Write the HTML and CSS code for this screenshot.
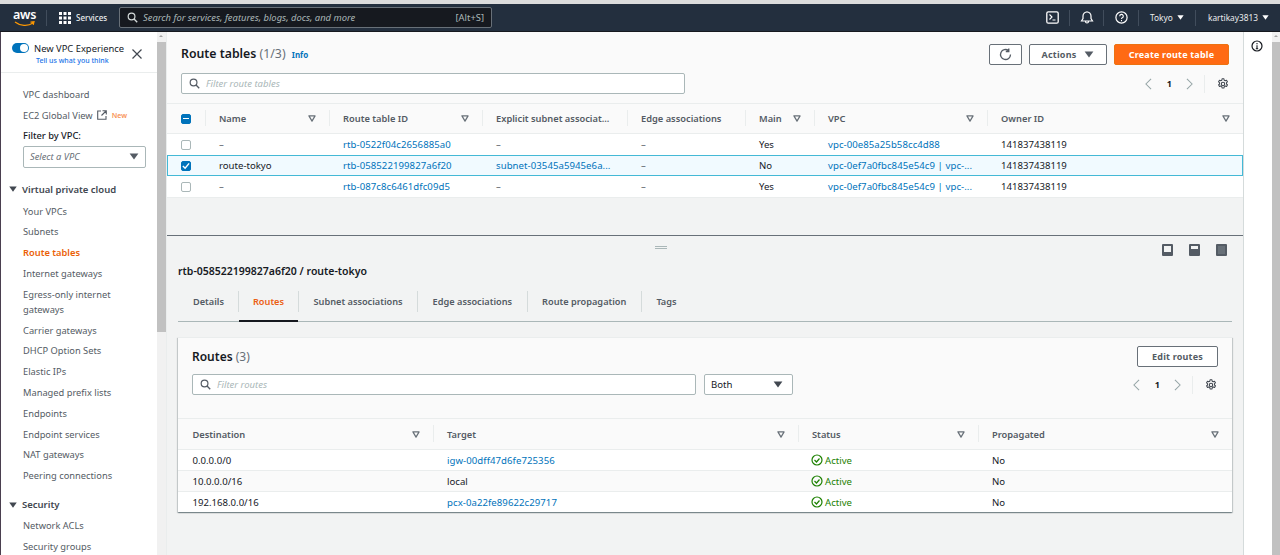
FILE: index.html
```html
<!DOCTYPE html>
<html lang="en">
<head>
<meta charset="utf-8">
<title>Route tables</title>
<link rel="stylesheet" href="styles.css">
</head>
<body>
<svg class="defs" width="0" height="0">
  <symbol id="sort" viewBox="0 0 9 8"><path d="M1 1h7L4.500 7z" fill="none" stroke="#687078" stroke-width="1.400" stroke-linejoin="round"/></symbol>
  <symbol id="tri" viewBox="0 0 10 8"><path d="M0 .5h10L5 7.500z" fill="currentColor"/></symbol>
  <symbol id="search" viewBox="0 0 14 14"><circle cx="5.800" cy="5.800" r="4.300" fill="none" stroke="currentColor" stroke-width="1.500"/><path d="M9 9l4 4" stroke="currentColor" stroke-width="1.700"/></symbol>
  <symbol id="gear" viewBox="0 0 14 14"><circle cx="7" cy="7" r="2" fill="none" stroke="#414750" stroke-width="1.300"/><path d="M5.900 1h2.200l.3 1.600 1.200.6 1.500-.6 1.100 1.900-1.200 1 .1 1.500 1.200 1-1.100 1.900-1.500-.6-1.200.7-.3 1.700H5.900l-.3-1.700-1.200-.7-1.500.6-1.100-1.900 1.200-1V5.500l-1.200-1 1.100-1.900 1.500.6 1.200-.6z" fill="none" stroke="#414750" stroke-width="1.200" stroke-linejoin="round"/></symbol>
  <symbol id="left" viewBox="0 0 8 14"><path d="M7 1L1 7l6 6" fill="none" stroke="#95a5a6" stroke-width="1.200"/></symbol>
  <symbol id="right" viewBox="0 0 8 14"><path d="M1 1l6 6-6 6" fill="none" stroke="#95a5a6" stroke-width="1.200"/></symbol>
  <symbol id="ok" viewBox="0 0 12 12"><circle cx="6" cy="6" r="5" fill="none" stroke="#1d8102" stroke-width="1.200"/><path d="M3.500 6l2 2 3-3.500" fill="none" stroke="#1d8102" stroke-width="1.200"/></symbol>
</svg>

<div class="browser-strip"></div>

<header class="topnav">
  <div class="logo"><span class="logo-text">aws</span><svg class="smile" width="22" height="6" viewBox="0 0 22 6"><path d="M1 1c5 4 13 4.500 18 1M16.500 1.200l3.500-.4-.8 3" fill="none" stroke="#f90" stroke-width="1.200"/></svg></div>
  <span class="nav-sep"></span>
  <svg class="grid-icon" width="12" height="12" viewBox="0 0 12 12"><path d="M0 0h3v3H0zM4.500 0h3v3h-3zM9 0h3v3H9zM0 4.500h3v3H0zM4.500 4.500h3v3h-3zM9 4.500h3v3H9zM0 9h3v3H0zM4.500 9h3v3h-3zM9 9h3v3H9z" fill="#fff"/></svg>
  <span class="services">Services</span>
  <div class="nav-search">
    <svg class="nav-search-icon" width="11" height="11"><use href="#search"/></svg>
    <span class="nav-search-text">Search for services, features, blogs, docs, and more</span>
    <span class="nav-search-key">[Alt+S]</span>
  </div>
  <div class="nav-right">
    <span class="nav-item nav-shell"><svg width="13" height="13" viewBox="0 0 13 13"><rect x=".8" y=".8" width="11.400" height="11.400" rx="1.500" fill="none" stroke="#fff" stroke-width="1.300"/><path d="M3.500 3.500L6 6 3.500 8.500M6.500 9h3" fill="none" stroke="#fff" stroke-width="1.100"/></svg></span>
    <span class="nav-item nav-bell"><svg width="14" height="13" viewBox="0 0 14 13"><path d="M1.500 10h11L11 7.500V5A4 4 0 0 0 3 5v2.500zM5.500 10.500a1.500 1.500 0 0 0 3 0M7 1V.2" fill="none" stroke="#fff" stroke-width="1.200"/></svg></span>
    <span class="nav-item nav-help"><svg width="13" height="13" viewBox="0 0 13 13"><circle cx="6.500" cy="6.500" r="5.600" fill="none" stroke="#fff" stroke-width="1.200"/><path d="M4.700 5.200a1.800 1.800 0 1 1 2.600 1.600c-.6.300-.8.700-.8 1.300M6.500 9.100v1.100" fill="none" stroke="#fff" stroke-width="1.100"/></svg></span>
    <span class="nav-item nav-region">Tokyo <svg class="nav-tri" width="7" height="5"><use href="#tri"/></svg></span>
    <span class="nav-item nav-user">kartikay3813 <svg class="nav-tri" width="7" height="5"><use href="#tri"/></svg></span>
  </div>
</header>

<div class="app">
  <aside class="sidebar">
    <div class="side-scroll">
      <div class="side-head">
        <div class="toggle-row">
          <span class="toggle"></span>
          <div class="toggle-copy">
            <div class="toggle-label">New VPC Experience</div>
            <div class="toggle-link">Tell us what you think</div>
          </div>
          <svg class="close" width="10" height="10" viewBox="0 0 10 10"><path d="M.5.500l9 9M9.500.500l-9 9" stroke="#414750" stroke-width="1.200"/></svg>
        </div>
      </div>
      <nav class="side-nav">
        <a class="side-link top-link">VPC dashboard</a>
        <a class="side-link ec2-link">EC2 Global View <svg width="10" height="10" viewBox="0 0 10 10"><path d="M4 1H.7v8.300H9V6M5.500.700h3.800v3.800M9 1L4.500 5.500" fill="none" stroke="#545b64" stroke-width="1.100"/></svg><span class="new-tag">New</span></a>
        <div class="filter-label">Filter by VPC:</div>
        <div class="filter-select"><span>Select a VPC</span><svg width="10" height="7" class="select-tri"><use href="#tri"/></svg></div>
        <div class="side-group"><svg width="8" height="6" class="group-tri"><use href="#tri"/></svg>Virtual private cloud</div>
        <a class="side-link">Your VPCs</a>
        <a class="side-link">Subnets</a>
        <a class="side-link active">Route tables</a>
        <a class="side-link">Internet gateways</a>
        <a class="side-link">Egress-only internet gateways</a>
        <a class="side-link">Carrier gateways</a>
        <a class="side-link">DHCP Option Sets</a>
        <a class="side-link">Elastic IPs</a>
        <a class="side-link">Managed prefix lists</a>
        <a class="side-link">Endpoints</a>
        <a class="side-link">Endpoint services</a>
        <a class="side-link">NAT gateways</a>
        <a class="side-link">Peering connections</a>
        <div class="side-group group-sec"><svg width="8" height="6" class="group-tri"><use href="#tri"/></svg>Security</div>
        <a class="side-link">Network ACLs</a>
        <a class="side-link">Security groups</a>
      </nav>
    </div>
    <div class="scrollbar side-bar"><span class="sb-arrow"></span><span class="sb-thumb side-thumb"></span></div>
  </aside>

  <main class="content">
    <section class="upper">
      <div class="upper-head">
        <div class="title-row">
          <h1 class="page-title">Route tables <span class="count">(1/3)</span> <a class="info">Info</a></h1>
          <div class="actions">
            <button class="btn btn-icon"><svg width="13" height="13" viewBox="0 0 13 13"><path d="M11.500 6.500A5 5 0 1 1 9.500 2.500M9.800.5v3h-3" fill="none" stroke="#545b64" stroke-width="1.300"/></svg></button>
            <button class="btn btn-actions">Actions <svg width="10" height="7"><use href="#tri"/></svg></button>
            <button class="btn btn-primary">Create route table</button>
          </div>
        </div>
        <div class="filter-row">
          <div class="search-box search-top"><svg width="11" height="11"><use href="#search"/></svg><span>Filter route tables</span></div>
          <div class="pager pager-top"><svg width="7" height="12"><use href="#left"/></svg><b>1</b><svg width="7" height="12"><use href="#right"/></svg><span class="pager-sep"></span><svg width="12" height="12"><use href="#gear"/></svg></div>
        </div>
      </div>
      <div class="rt-table">
        <div class="rt-row rt-header">
          <div class="cell cell-check"><span class="check check-mixed"></span></div>
          <div class="cell th">Name<svg width="8" height="7"><use href="#sort"/></svg></div>
          <div class="cell th">Route table ID<svg width="8" height="7"><use href="#sort"/></svg></div>
          <div class="cell th">Explicit subnet associat...</div>
          <div class="cell th">Edge associations</div>
          <div class="cell th">Main<svg width="8" height="7"><use href="#sort"/></svg></div>
          <div class="cell th">VPC<svg width="8" height="7"><use href="#sort"/></svg></div>
          <div class="cell th">Owner ID<svg width="8" height="7"><use href="#sort"/></svg></div>
        </div>
        <div class="rt-row">
          <div class="cell cell-check"><span class="check"></span></div>
          <div class="cell dash">–</div><div class="cell"><a class="link">rtb-0522f04c2656885a0</a></div><div class="cell dash">–</div><div class="cell dash">–</div><div class="cell">Yes</div><div class="cell"><a class="link">vpc-00e85a25b58cc4d88</a></div><div class="cell">141837438119</div>
        </div>
        <div class="rt-row rt-selected">
          <div class="cell cell-check"><span class="check check-on"><svg width="9" height="8" viewBox="0 0 9 8"><path d="M1 4l2.500 2.500L8 1" fill="none" stroke="#fff" stroke-width="1.600"/></svg></span></div>
          <div class="cell">route-tokyo</div><div class="cell"><a class="link">rtb-058522199827a6f20</a></div><div class="cell"><a class="link">subnet-03545a5945e6a...</a></div><div class="cell dash">–</div><div class="cell">No</div><div class="cell"><a class="link">vpc-0ef7a0fbc845e54c9 | vpc-...</a></div><div class="cell">141837438119</div>
        </div>
        <div class="rt-row">
          <div class="cell cell-check"><span class="check"></span></div>
          <div class="cell dash">–</div><div class="cell"><a class="link">rtb-087c8c6461dfc09d5</a></div><div class="cell dash">–</div><div class="cell dash">–</div><div class="cell">Yes</div><div class="cell"><a class="link">vpc-0ef7a0fbc845e54c9 | vpc-...</a></div><div class="cell">141837438119</div>
        </div>
      </div>
    </section>

    <section class="lower">
      <div class="split-bar">
        <span class="handle"></span>
        <div class="split-icons">
          <span class="split-icon split-a"></span><span class="split-icon split-b"></span><span class="split-icon split-c"></span>
        </div>
      </div>
      <h2 class="detail-title">rtb-058522199827a6f20 / route-tokyo</h2>
      <div class="tabs">
        <span class="tab">Details</span>
        <span class="tab tab-active">Routes</span>
        <span class="tab">Subnet associations</span>
        <span class="tab">Edge associations</span>
        <span class="tab">Route propagation</span>
        <span class="tab tab-last">Tags</span>
      </div>
      <div class="card">
        <div class="card-head">
          <div class="card-title-row">
            <h2 class="card-title">Routes <span class="count">(3)</span></h2>
            <button class="btn btn-edit">Edit routes</button>
          </div>
          <div class="card-filter">
            <div class="search-box search-routes"><svg width="11" height="11"><use href="#search"/></svg><span>Filter routes</span></div>
            <div class="both-select"><span>Both</span><svg width="10" height="7"><use href="#tri"/></svg></div>
            <div class="pager pager-routes"><svg width="7" height="12"><use href="#left"/></svg><b>1</b><svg width="7" height="12"><use href="#right"/></svg><span class="pager-sep"></span><svg width="12" height="12"><use href="#gear"/></svg></div>
          </div>
        </div>
        <div class="routes-table">
          <div class="r-row r-header">
            <div class="cell th">Destination<svg width="8" height="7"><use href="#sort"/></svg></div>
            <div class="cell th">Target<svg width="8" height="7"><use href="#sort"/></svg></div>
            <div class="cell th">Status<svg width="8" height="7"><use href="#sort"/></svg></div>
            <div class="cell th">Propagated<svg width="8" height="7"><use href="#sort"/></svg></div>
          </div>
          <div class="r-row">
            <div class="cell">0.0.0.0/0</div><div class="cell"><a class="link">igw-00dff47d6fe725356</a></div><div class="cell status"><svg width="12" height="12"><use href="#ok"/></svg>Active</div><div class="cell">No</div>
          </div>
          <div class="r-row r-alt">
            <div class="cell">10.0.0.0/16</div><div class="cell">local</div><div class="cell status"><svg width="12" height="12"><use href="#ok"/></svg>Active</div><div class="cell">No</div>
          </div>
          <div class="r-row">
            <div class="cell">192.168.0.0/16</div><div class="cell"><a class="link">pcx-0a22fe89622c29717</a></div><div class="cell status"><svg width="12" height="12"><use href="#ok"/></svg>Active</div><div class="cell">No</div>
          </div>
        </div>
      </div>
    </section>
  </main>

  <aside class="tools">
    <svg class="tools-info" width="12" height="12" viewBox="0 0 12 12"><circle cx="6" cy="6" r="5" fill="none" stroke="#16191f" stroke-width="1.200"/><path d="M6 5.200v3.500M6 3v1.200M4.800 8.700h2.400" stroke="#16191f" stroke-width="1.100"/></svg>
    <div class="scrollbar page-bar"><span class="sb-arrow"></span><span class="sb-thumb page-thumb"></span></div>
  </aside>
</div>
</body>
</html>
```
FILE: styles.css
```css
* { box-sizing: border-box; }
html, body { margin: 0; height: 555px; overflow: hidden; }
body { font-family: "Noto Sans", sans-serif; font-size: 9.6px; color: #16191f; background: #f2f3f3; display: flex; flex-direction: column; }
.defs { position: absolute; }
a { color: inherit; text-decoration: none; }
h1, h2 { margin: 0; }
button { font-family: inherit; cursor: default; }

.browser-strip { height: 4px; background: #dcdcdc; flex: none; }
.topnav { height: 28px; flex: none; background: #232f3e; color: #fff; display: flex; align-items: center; padding-left: 14px; border-bottom: 1px solid #16191f; }
.logo { width: 21px; height: 20px; display: flex; flex-direction: column; align-items: center; margin-right: 11px; }
.logo-text { font-size: 12.5px; font-weight: 600; line-height: 13px; letter-spacing: -.2px; }
.smile { margin-top: 0; }
.nav-sep { width: 1px; height: 16px; background: #414d5c; margin-right: 12px; }
.grid-icon { margin-right: 5px; }
.services { font-size: 8px; font-weight: 500; width: 43px; color: #eaeded; }
.nav-search { width: 373px; height: 21px; background: #16191f; border: 1px solid #687078; border-radius: 2px; display: flex; align-items: center; padding: 0 7px 0 7px; }
.nav-search-icon { color: #d5dbdb; flex: none; margin-right: 5px; }
.nav-search-text { font-size: 9.4px; font-style: italic; color: #aab7b8; flex: 1; white-space: nowrap; }
.nav-search-key { font-size: 9.4px; color: #aab7b8; }
.nav-right { margin-left: auto; display: flex; align-items: center; height: 100%; }
.nav-item { display: flex; align-items: center; gap: 4px; height: 16px; font-size: 8.3px; color: #eaeded; border-left: 1px solid #414d5c; white-space: nowrap; }
.nav-shell { border-left: none; padding-right: 10px; }
.nav-bell { width: 34px; justify-content: center; }
.nav-help { width: 35px; justify-content: center; }
.nav-region { width: 57px; padding-left: 11px; }
.nav-user { width: 85px; padding-left: 12px; }
.nav-tri { color: #fff; }

.app { flex: 1; display: flex; min-height: 0; }

.sidebar { width: 167px; flex: none; display: flex; background: #fff; border-left: 1px solid #4a3f4f; border-right: 1px solid #eaeded; overflow: hidden; }
.side-scroll { flex: 1; min-width: 0; overflow: hidden; }
.side-head { height: 41px; border-bottom: 1px solid #eaeded; padding: 10px 0 0 11px; }
.toggle-row { display: flex; align-items: flex-start; }
.toggle { width: 17px; height: 10px; margin-top: 1px; border-radius: 5px; background: #0073bb; position: relative; flex: none; }
.toggle::after { content: ""; position: absolute; right: 1px; top: 1px; width: 8px; height: 8px; border-radius: 50%; background: #fff; }
.toggle-copy { margin-left: 5px; width: 96px; flex: none; }
.toggle-label { font-size: 9.4px; line-height: 13px; white-space: nowrap; }
.toggle-link { font-size: 7px; line-height: 10px; font-weight: 500; color: #1a73e8; margin: 1px 0 0 2px; }
.close { margin: 7px 0 0 2px; flex: none; }
.side-nav { padding: 0 0 0 22px; color: #545b64; font-size: 9.3px; }
.side-link { display: block; line-height: 15px; padding: 3px 8px 2.8px 0; white-space: normal; }
.top-link { margin-top: 11px; }
.ec2-link { display: flex; align-items: center; }
.ec2-link svg { margin-left: 4px; }
.new-tag { color: #f89256; font-size: 7px; font-weight: 600; margin-left: 5px; }
.filter-label { line-height: 15px; font-weight: 500; color: #16191f; margin-top: 2px; }
.filter-select { width: 123px; height: 22px; margin-top: 3px; border: 1px solid #aab7b8; border-radius: 2px; display: flex; align-items: center; justify-content: space-between; padding: 0 6px; font-style: italic; color: #687078; background: #fff; }
.select-tri { color: #545b64; }
.side-group { font-weight: 600; font-size: 9.5px; line-height: 15px; margin: 14px 0 4px -13px; display: flex; align-items: center; gap: 5px; color: #414750; }
.group-tri { color: #414750; margin-left: -1px; }
.group-sec { margin: 11.5px 0 3px -13px; }
.active { color: #eb5f07; font-weight: 600; }

.scrollbar { width: 9px; flex: none; background: #f1f1f1; display: flex; flex-direction: column; align-items: stretch; }
.sb-arrow { height: 9px; position: relative; margin-bottom: 1px; }
.sb-arrow::after { content: ""; position: absolute; left: 2px; top: 3px; border: 2.500px solid transparent; border-bottom-color: #a3a3a3; border-top: 0; }
.sb-thumb { background: #c1c1c1; }
.side-thumb { height: 290px; }
.page-thumb { flex: 1; }
.page-bar { width: 8px; }

.content { width: 1077px; flex: none; display: flex; flex-direction: column; border-right: 1px solid #d5dbdb; }
.upper { height: 203px; flex: none; background: #f2f3f3; }
.upper-head { height: 72px; background: #fafafa; padding: 11px 14px 0 14px; border-bottom: 1px solid #eaeded; }
.title-row { display: flex; justify-content: space-between; align-items: center; height: 22px; }
.page-title { font-size: 12.3px; font-weight: 600; line-height: 22px; padding-top: 1px; }
.count { font-weight: 400; color: #687078; }
.info { font-size: 8px; font-weight: 700; color: #0073bb; margin-left: 3px; }
.actions { display: flex; gap: 7px; }
.btn { height: 21px; background: #fff; border: 1px solid #687078; border-radius: 2px; padding: 0; font-weight: 700; font-size: 9px; color: #545b64; display: flex; align-items: center; justify-content: center; letter-spacing: .2px; }
.btn-icon { width: 33px; }
.btn-actions { width: 78px; gap: 8px; }
.btn-primary { width: 115px; color: #fff; background: #ff6a13; border-color: #ec7211; }
.filter-row { display: flex; justify-content: space-between; align-items: center; margin-top: 8px; }
.search-box { height: 21px; background: #fff; border: 1px solid #aab7b8; border-radius: 2px; display: flex; align-items: center; padding: 0 7px; gap: 6px; color: #545b64; font-size: 9.5px; }
.search-box span { font-style: italic; color: #aab7b8; }
.search-top { width: 504px; }
.search-routes { width: 504px; }
.pager { display: flex; align-items: center; }
.pager b { font-size: 9px; margin: 0 14px 0 15px; color: #16191f; }
.pager-sep { width: 1px; height: 18px; background: #eaeded; margin: 0 12px 0 11px; }
.pager-routes { margin-right: 1px; }

.rt-table { background: #fff; border-bottom: 1px solid #eaeded; }
.rt-row, .r-row { display: grid; align-items: stretch; }
.rt-row { grid-template-columns: 38px 124px 153px 145px 118px 69px 173px 1fr; height: 21px; background: #fff; }
.rt-header { height: 30px; background: #fafafa; border-bottom: 1px solid #eaeded; }
.rt-selected { background: #f1faff; outline: 1px solid #44b9d6; outline-offset: -1px; position: relative; }
.cell { display: flex; align-items: center; padding-left: 14px; white-space: nowrap; overflow: hidden; min-width: 0; }
.dash { color: #545b64; }
.cell-check { justify-content: center; padding-left: 0; }
.th { font-weight: 600; font-size: 9.3px; color: #545b64; justify-content: space-between; padding: 0 13px 0 14px; position: relative; }
.th::before { content: ""; position: absolute; left: 0; top: 6px; bottom: 7px; width: 1px; background: #eaeded; }
.check { width: 10px; height: 10px; border: 1px solid #aab7b8; border-radius: 2px; background: #fff; display: flex; align-items: center; justify-content: center; }
.check-on { background: #0073bb; border-color: #0073bb; }
.check-mixed { background: #0073bb; border-color: #0073bb; }
.check-mixed::after { content: ""; width: 6px; height: 1.500px; background: #fff; }
.link { color: #0073bb; letter-spacing: .06px; }

.lower { flex: 1; min-height: 0; display: flex; flex-direction: column; background: #f2f3f3; border-top: 1px solid #687078; padding: 0 11px 0 11px; }
.split-bar { height: 28px; flex: none; display: flex; align-items: center; position: relative; }
.handle { position: absolute; left: 477px; top: 10px; width: 12px; height: 3px; border-top: 1px solid #aab7b8; border-bottom: 1px solid #aab7b8; }
.split-icons { margin-left: auto; display: flex; gap: 16px; padding-right: 5px; }
.split-icon { width: 11px; height: 12px; border: 2px solid #545b64; border-radius: 1px; background: #f2f3f3; position: relative; }
.split-icon::after { content: ""; position: absolute; left: 0; right: 0; bottom: 0; background: #545b64; }
.split-a::after { height: 2px; }
.split-b::after { height: 5px; }
.split-c::after { height: 8px; background: #687078; }
.detail-title { font-size: 10.5px; font-weight: 600; line-height: 14px; }
.tabs { display: flex; height: 41px; margin-top: 3px; border-bottom: 1px solid #aab7b8; align-items: center; position: relative; }
.tab { height: 21px; display: flex; align-items: center; padding: 0 14.500px; font-size: 9.2px; font-weight: 600; color: #545b64; border-right: 1px solid #d5dbdb; white-space: nowrap; }
.tab:first-child { padding-left: 15px; width: 61px; }
.tab-last { border-right: none; }
.tab-active { color: #ec5f14; position: relative; width: 60px; justify-content: center; padding: 0; }
.tab-active::after { content: ""; position: absolute; left: 0; right: 0; bottom: -10px; height: 2px; background: #16191f; }
.card { margin-top: 15px; background: #fafafa; box-shadow: 0 1px 1px 0 rgba(0,28,36,.3), 1px 1px 1px 0 rgba(0,28,36,.15), -1px 1px 1px 0 rgba(0,28,36,.15); border-top: 1px solid #eaeded; }
.card-head { height: 81px; padding: 8px 14px; border-bottom: 1px solid #eaeded; }
.card-title-row { display: flex; justify-content: space-between; align-items: center; height: 21px; }
.card-title { font-size: 12px; font-weight: 600; line-height: 21px; }
.btn-edit { width: 81px; }
.card-filter { display: flex; align-items: center; margin-top: 7px; }
.both-select { width: 89px; height: 21px; margin-left: 8px; border: 1px solid #aab7b8; border-radius: 2px; background: #fff; display: flex; align-items: center; justify-content: space-between; padding: 0 9px 0 6px; color: #16191f; }
.both-select svg { color: #414750; }
.pager-routes { margin-left: auto; }
.r-row { grid-template-columns: 255px 365px 180px 1fr; height: 21px; background: #fff; border-top: 1px solid #eaeded; }
.r-row .cell:first-child { padding-left: 14.500px; }
.r-row .th:first-child::before { display: none; }
.r-header { height: 30px; background: #fafafa; border-top: none; }
.r-alt { background: #fafafa; }
.status { color: #1d8102; gap: 2px; padding-left: 13px; }
.tools { flex: 1; background: #fff; display: flex; justify-content: space-between; padding-left: 7px; }
.tools-info { margin-top: 8px; }
```
